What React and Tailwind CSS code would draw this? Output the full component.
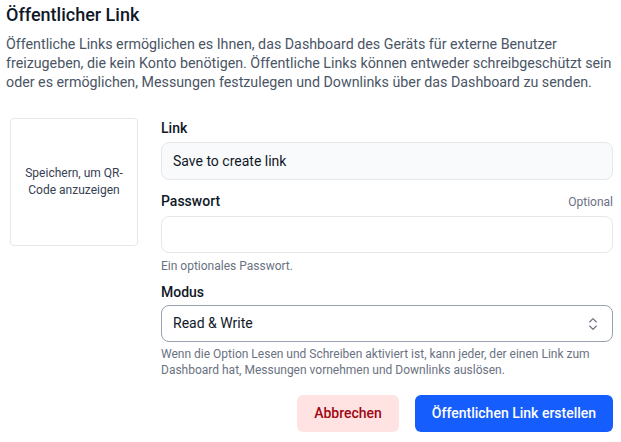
import { ChevronsUpDown } from 'lucide-react';

export default function App() {
  return (
    <div className="min-h-screen bg-white px-[6px] pt-[1px] font-['Roboto',sans-serif] text-gray-900">
      <h2 className="text-[18px] leading-[28px] font-medium">Öffentlicher Link</h2>
      <p className="mt-[6px] text-[14.25px] leading-[19px] text-gray-600">
        Öffentliche Links ermöglichen es Ihnen, das Dashboard des Geräts für externe Benutzer
        freizugeben, die kein Konto benötigen. Öffentliche Links können entweder schreibgeschützt sein
        oder es ermöglichen, Messungen festzulegen und Downlinks über das Dashboard zu senden.
      </p>

      <div className="mt-[26px] flex gap-[23px] pl-[4px]">
        <div className="flex h-[128px] w-[128px] shrink-0 items-center justify-center rounded border border-gray-200 px-3 text-center text-[12px] leading-[17px] text-gray-700">
          Speichern, um QR-Code anzuzeigen
        </div>

        <div className="w-[452px]">
          <label className="block text-[14px] leading-[20px] font-medium">Link</label>
          <div className="mt-[4px] flex h-[38px] items-center rounded-lg border border-gray-200 bg-gray-50 px-[11px] text-[14px] text-gray-900">
            Save to create link
          </div>

          <div className="mt-[11px] flex items-end justify-between">
            <label className="block text-[14px] leading-[20px] font-medium">Passwort</label>
            <span className="text-[12px] leading-[18px] text-gray-500">Optional</span>
          </div>
          <input
            type="password"
            className="mt-[5px] block h-[37px] w-full rounded-lg border border-gray-200 bg-white px-[11px] text-[14px] outline-none"
          />
          <p className="mt-[5px] text-[12px] leading-[16px] text-gray-500">Ein optionales Passwort.</p>

          <label className="mt-[8px] block text-[14px] leading-[20px] font-medium">Modus</label>
          <div className="mt-[3px] flex h-[37px] items-center justify-between rounded-lg border border-gray-400 px-[11px] text-[14px] text-gray-900">
            <span>Read &amp; Write</span>
            <ChevronsUpDown className="h-4 w-4 text-gray-500" strokeWidth={1.75} />
          </div>
          <p className="mt-[4px] text-[12px] leading-[16px] text-gray-500">
            Wenn die Option Lesen und Schreiben aktiviert ist, kann jeder, der einen Link zum
            Dashboard hat, Messungen vornehmen und Downlinks auslösen.
          </p>

          <div className="mt-[17px] flex justify-end gap-[16px]">
            <button className="h-[37px] w-[102px] rounded-md bg-red-100 text-[14px] font-medium text-red-800">
              Abbrechen
            </button>
            <button className="h-[37px] w-[198px] rounded-md bg-blue-600 text-[14px] font-medium text-white">
              Öffentlichen Link erstellen
            </button>
          </div>
        </div>
      </div>
    </div>
  );
}
